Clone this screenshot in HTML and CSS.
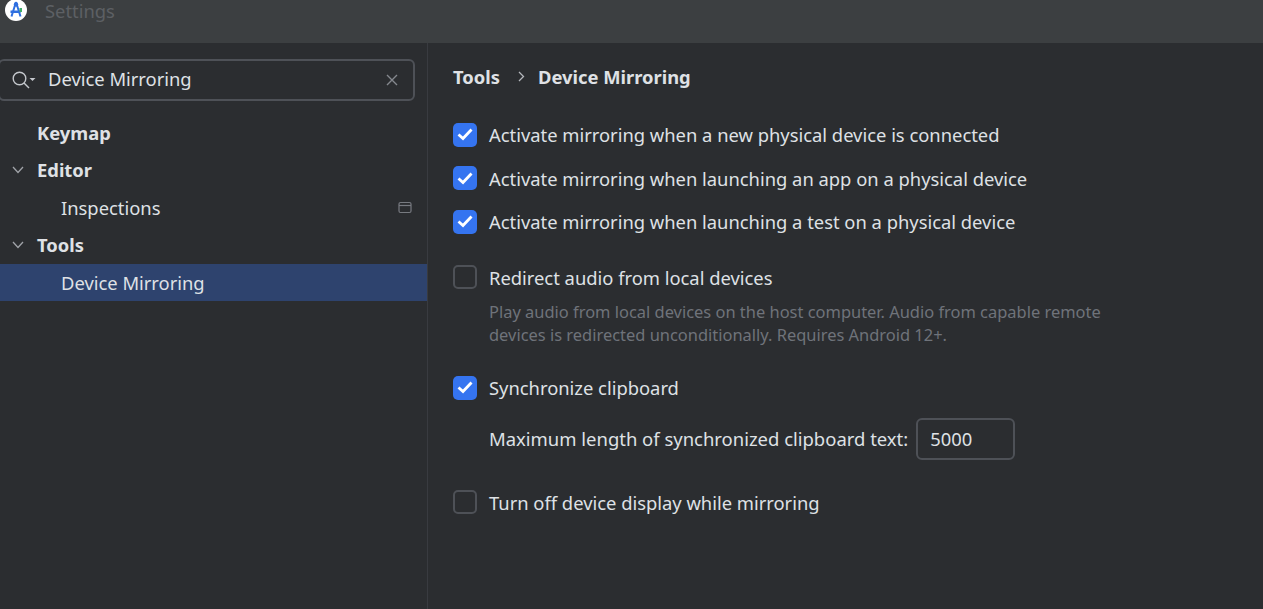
FILE: index.html
```html
<!DOCTYPE html>
<html lang="en">
<head>
    <meta charset="UTF-8">
    <title>Settings</title>
    <link rel="stylesheet" href="styles.css">
</head>
<body>
    <div class="titlebar">
        <svg class="app-logo" width="24" height="24" viewBox="0 0 24 24">
            <circle cx="12" cy="10" r="11" fill="#fff"/>
            <path d="M12 2 L7.5 16.5 M12 2 L16.5 16.5" stroke="#2f6fe0" stroke-width="2" fill="none"/>
            <path d="M6.5 10.5 H16.5 V13 H6.5 Z" fill="#2f6fe0"/>
            <circle cx="12" cy="4.5" r="2.2" fill="#2f6fe0"/>
            <rect x="15.5" y="8" width="2.5" height="4" fill="#3fae6a"/>
        </svg>
        <span class="title">Settings</span>
    </div>

    <div class="main">
        <div class="sidebar">
            <div class="search">
                <svg class="search-icon" width="24" height="20" viewBox="0 0 24 20">
                    <circle cx="7.5" cy="8.5" r="6.3" stroke="#c4c7cc" stroke-width="1.4" fill="none"/>
                    <path d="M12 13 L17 18" stroke="#c4c7cc" stroke-width="1.4"/>
                    <path d="M17.5 8 H23.5 L20.5 11 Z" fill="#c4c7cc"/>
                </svg>
                <span class="search-text">Device Mirroring</span>
                <svg class="search-clear" width="12" height="12" viewBox="0 0 12 12">
                    <path d="M1 1 L11 11 M11 1 L1 11" stroke="#85888e" stroke-width="1.4"/>
                </svg>
            </div>

            <div class="tree">
                <div class="tree-row top"><span class="bold">Keymap</span></div>
                <div class="tree-row top">
                    <svg class="chevron" width="12" height="8" viewBox="0 0 12 8"><path d="M1 1 L6 6.5 L11 1" stroke="#a0a3a8" stroke-width="1.3" fill="none"/></svg>
                    <span class="bold">Editor</span>
                </div>
                <div class="tree-row child">
                    <span>Inspections</span>
                    <svg class="page-icon" width="14" height="13" viewBox="0 0 14 13">
                        <rect x="1" y="1.5" width="12" height="10" rx="1.5" stroke="#777a80" stroke-width="1.2" fill="none"/>
                        <path d="M1 4.5 H13" stroke="#777a80" stroke-width="1.2"/>
                    </svg>
                </div>
                <div class="tree-row top">
                    <svg class="chevron" width="12" height="8" viewBox="0 0 12 8"><path d="M1 1 L6 6.5 L11 1" stroke="#a0a3a8" stroke-width="1.3" fill="none"/></svg>
                    <span class="bold">Tools</span>
                </div>
                <div class="tree-row child selected"><span>Device Mirroring</span></div>
            </div>
        </div>

        <div class="content">
            <div class="breadcrumb">
                <span>Tools</span>
                <svg class="crumb-sep" width="7" height="11" viewBox="0 0 7 11"><path d="M1 1 L5.5 5.5 L1 10" stroke="#b4b7bc" stroke-width="1.3" fill="none"/></svg>
                <span>Device Mirroring</span>
            </div>

            <div class="group first">
                <div class="check-row">
                    <span class="box on"><svg width="16" height="13" viewBox="0 0 16 13"><path d="M1.5 6.5 L6 10.5 L14.5 1.5" stroke="#fff" stroke-width="2.8" fill="none"/></svg></span>
                    <span>Activate mirroring when a new physical device is connected</span>
                </div>
                <div class="check-row">
                    <span class="box on"><svg width="16" height="13" viewBox="0 0 16 13"><path d="M1.5 6.5 L6 10.5 L14.5 1.5" stroke="#fff" stroke-width="2.8" fill="none"/></svg></span>
                    <span>Activate mirroring when launching an app on a physical device</span>
                </div>
                <div class="check-row">
                    <span class="box on"><svg width="16" height="13" viewBox="0 0 16 13"><path d="M1.5 6.5 L6 10.5 L14.5 1.5" stroke="#fff" stroke-width="2.8" fill="none"/></svg></span>
                    <span>Activate mirroring when launching a test on a physical device</span>
                </div>
            </div>

            <div class="group audio">
                <div class="check-row">
                    <span class="box"></span>
                    <span>Redirect audio from local devices</span>
                </div>
                <p class="hint">Play audio from local devices on the host computer. Audio from capable remote<br>devices is redirected unconditionally. Requires Android 12+.</p>
            </div>

            <div class="group clipboard">
                <div class="check-row">
                    <span class="box on"><svg width="16" height="13" viewBox="0 0 16 13"><path d="M1.5 6.5 L6 10.5 L14.5 1.5" stroke="#fff" stroke-width="2.8" fill="none"/></svg></span>
                    <span>Synchronize clipboard</span>
                </div>
                <div class="length-row">
                    <span class="length-label">Maximum length of synchronized clipboard text:</span>
                    <span class="num-input">5000</span>
                </div>
            </div>

            <div class="group last">
                <div class="check-row">
                    <span class="box"></span>
                    <span>Turn off device display while mirroring</span>
                </div>
            </div>
        </div>
    </div>
</body>
</html>
```

FILE: styles.css
```css
* {
    box-sizing: border-box;
}
html, body {
    height: 100%;
}
body {
    margin: 0;
    overflow: hidden;
    background-color: #2b2d30;
    color: #dfe1e5;
    font-family: "Noto Sans", "Open Sans", sans-serif;
    font-size: 18.38px;
}
.titlebar {
    height: 43px;
    background-color: #3c3f41;
    display: flex;
    align-items: flex-start;
    overflow: hidden;
}
.app-logo {
    margin: 0 0 0 4px;
}
.title {
    margin-left: 17px;
    line-height: 21px;
    color: #5d6064;
}
.main {
    display: flex;
    height: 566px;
}
.sidebar {
    width: 428px;
    border-right: 1px solid #393b40;
    padding-top: 16px;
}
.search {
    height: 42px;
    width: 417px;
    margin-left: -2px;
    padding: 0 15px 0 12px;
    border: 2px solid #4e5157;
    border-radius: 6px;
    display: flex;
    align-items: center;
}
.search-icon {
    flex: none;
}
.search-text {
    margin-left: 12px;
    flex: 1;
    position: relative;
    top: -2px;
}
.tree {
    margin-top: 12.5px;
}
.tree-row {
    height: 37.5px;
    display: flex;
    align-items: center;
    position: relative;
}
.tree-row.top {
    padding-left: 37px;
}
.tree-row.child {
    padding-left: 61px;
    padding-right: 15px;
    justify-content: space-between;
}
.tree-row.selected {
    background-color: #2e436e;
}
.bold {
    font-weight: 700;
}
.chevron {
    position: absolute;
    left: 12px;
    top: 15px;
}
.content {
    flex: 1;
    padding: 17px 0 0 25px;
}
.breadcrumb {
    display: flex;
    align-items: center;
    height: 32px;
    font-weight: 700;
}
.crumb-sep {
    margin: 0 13px 0 18px;
}
.group.first {
    margin-top: 30.5px;
}
.check-row {
    display: flex;
    align-items: center;
    gap: 12px;
    height: 24px;
    margin-bottom: 19.5px;
}
.box {
    width: 24px;
    height: 24px;
    flex: none;
    border: 2px solid #4e5157;
    border-radius: 5px;
    display: flex;
    align-items: center;
    justify-content: center;
}
.box.on {
    background-color: #3574f0;
    border: none;
}
.audio {
    margin-top: 31.5px;
}
.hint {
    margin: -9px 0 0 36px;
    color: #6f737a;
    font-size: 16.45px;
    line-height: 23px;
}
.clipboard {
    margin-top: 30px;
}
.length-row {
    display: flex;
    align-items: center;
    gap: 8px;
    margin: -2px 0 0 36px;
    height: 42px;
}
.length-label {
    font-size: 18.47px;
}
.num-input {
    width: 99px;
    height: 42px;
    margin-top: 2px;
    padding: 0 0 2px 12px;
    border: 2px solid #4e5157;
    border-radius: 6px;
    display: flex;
    align-items: center;
}
.last {
    margin-top: 31px;
}
```
